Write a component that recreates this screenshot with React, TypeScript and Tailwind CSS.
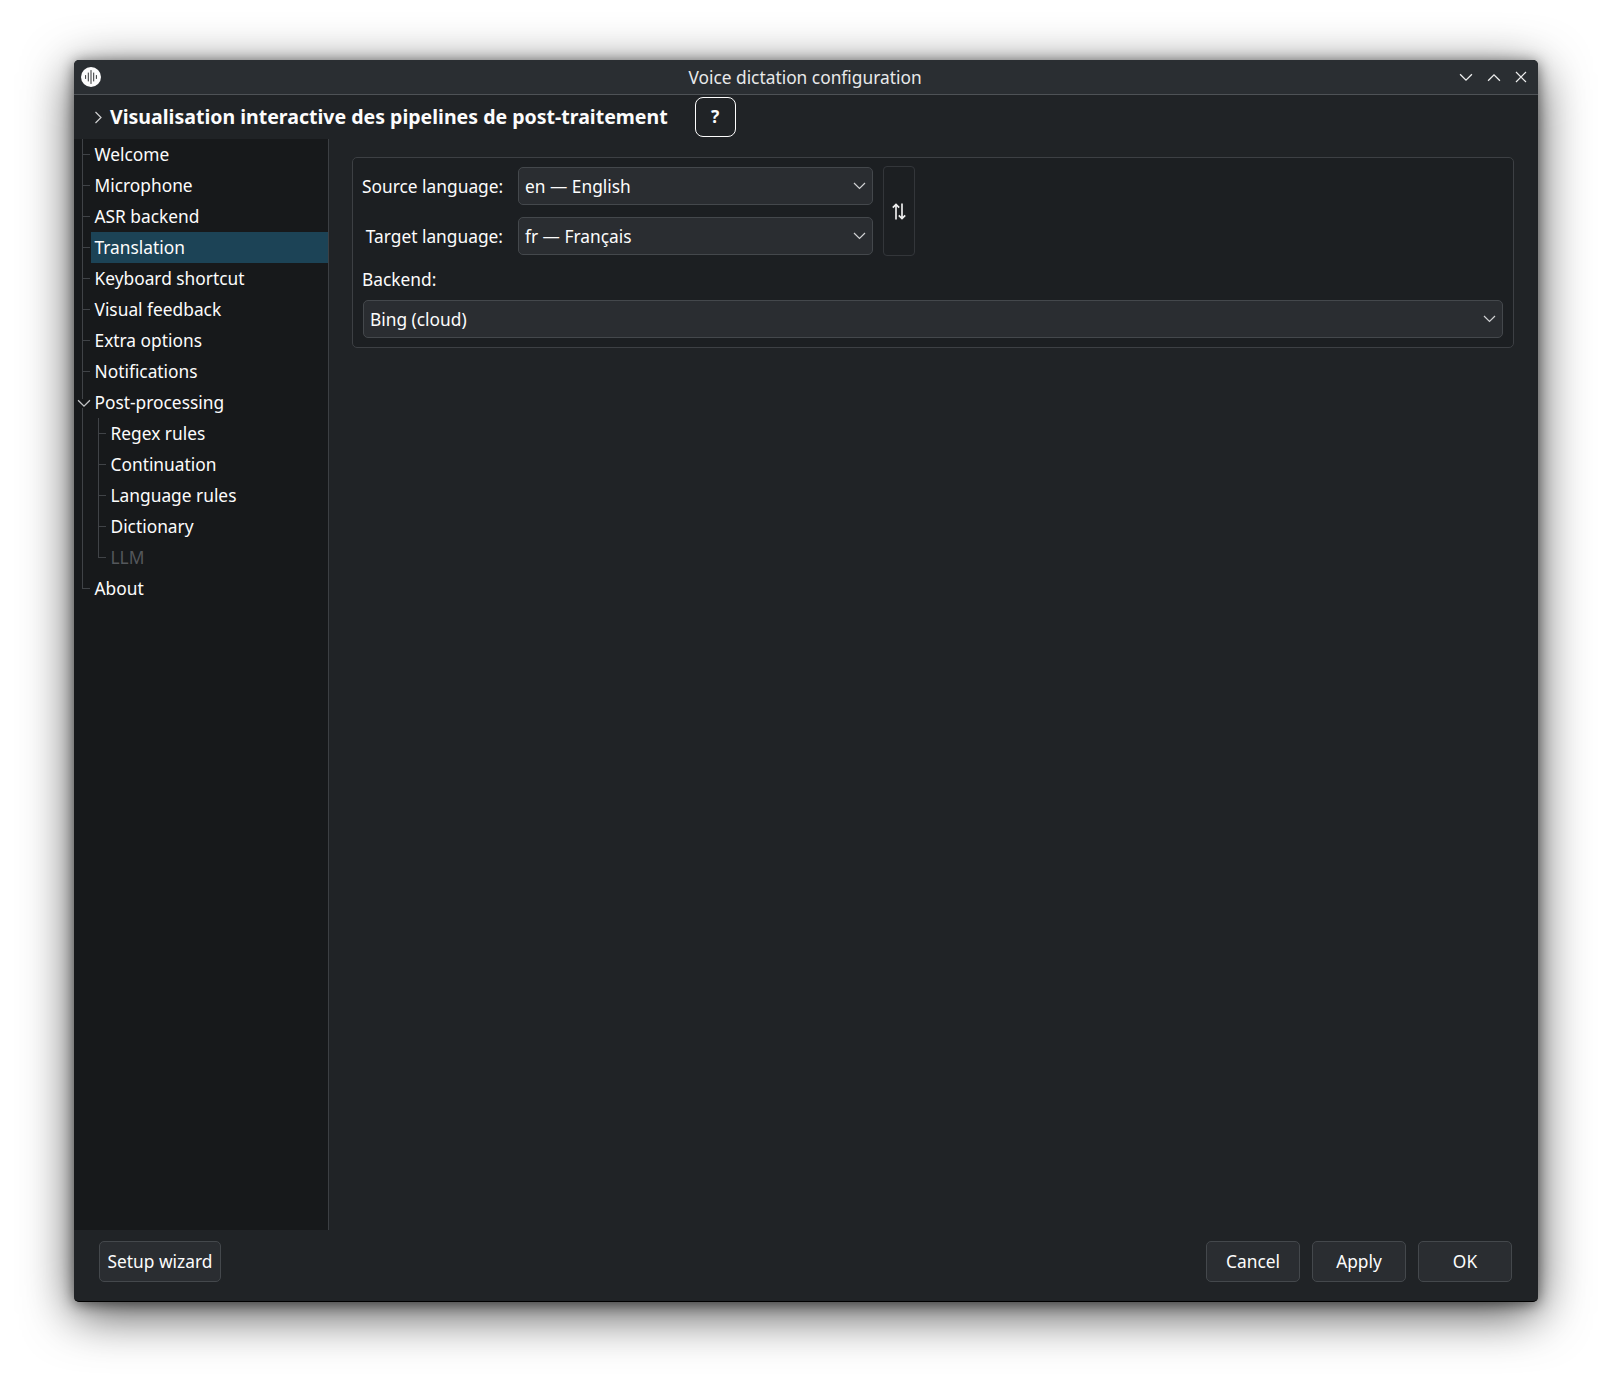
import React from "react";

const Chevron = ({ dir = "down", className = "" }: { dir?: "down" | "up" | "right"; className?: string }) => {
  const d = dir === "down" ? "M1 1 L6.5 6.5 L12 1" : dir === "up" ? "M1 7 L6.5 1.5 L12 7" : "M1.5 1 L7 6.5 L1.5 12";
  const box = dir === "right" ? "0 0 9 13" : "0 0 13 8";
  return (
    <svg viewBox={box} className={className} fill="none" stroke="currentColor" strokeWidth="1.2">
      <path d={d} />
    </svg>
  );
};

const TreeRow = ({
  label,
  level = 0,
  selected = false,
  disabled = false,
  last = false,
  expanded = false,
}: {
  label: string;
  level?: number;
  selected?: boolean;
  disabled?: boolean;
  last?: boolean;
  expanded?: boolean;
}) => (
  <div className="relative h-[31px] flex items-center">
    <span className={`absolute left-[8px] top-0 w-px bg-[#404347] ${level === 0 && last ? "h-[16px]" : "h-full"}`} />
    {level === 1 && (
      <span className={`absolute left-[24px] top-0 w-px bg-[#404347] ${last ? "h-[16px]" : "h-full"}`} />
    )}
    {level === 0 && !expanded && <span className="absolute left-[9px] top-[15px] w-[7px] h-px bg-[#404347]" />}
    {level === 1 && <span className="absolute left-[25px] top-[15px] w-[7px] h-px bg-[#404347]" />}
    {expanded && (
      <Chevron className="absolute left-[3px] top-[12px] w-[14px] h-[9px] text-[#c4c6c8] bg-[#17191b]" />
    )}
    <div
      className={`h-full flex-1 flex items-center ${level === 1 ? "ml-[33px] pl-[3.5px]" : "ml-[17px] pl-[3.5px]"} ${
        selected ? "bg-[#1c4356]" : ""
      } ${disabled ? "text-[#54575b]" : "text-[#fcfcfc]"}`}
    >
      <span className="leading-none">{label}</span>
    </div>
  </div>
);

const Combo = ({ label, className = "" }: { label: string; className?: string }) => (
  <div
    className={`h-[38px] flex items-center justify-between rounded-[5px] border border-[#44484c] bg-[#2a2d31] pl-[6px] pr-[6px] text-[#fcfcfc] ${className}`}
  >
    <span className="pt-[2px]">{label}</span>
    <Chevron className="w-[13px] h-[8px] text-[#d0d1d3]" />
  </div>
);

const Btn = ({ label, className = "" }: { label: string; className?: string }) => (
  <button
    className={`h-[41px] flex items-center justify-center rounded-[5px] border border-[#44484c] bg-[#2a2d31] text-[#fcfcfc] ${className}`}
  >
    {label}
  </button>
);

export default function App() {
  return (
    <div
      className="w-[1611px] h-[1391px] bg-white pt-[60px] pl-[74px] overflow-hidden text-[17.33px]"
      style={{ fontFamily: '"Noto Sans", sans-serif' }}
    >
      <div className="w-[1464px] h-[1242px] rounded-[5px] flex flex-col overflow-hidden bg-[#202326] border-b border-b-black shadow-[0_12px_50px_rgba(0,0,0,0.7),0_2px_14px_rgba(0,0,0,0.5)]">
        {/* title bar */}
        <div className="h-[35px] shrink-0 grid grid-cols-[1fr_auto_1fr] items-center bg-[#2a2e32] border-b border-[#4e5256] pl-[7px] pr-[11px]">
          <svg viewBox="0 0 20 20" className="w-[20px] h-[20px]">
            <circle cx="10" cy="10" r="10" fill="#fcfcfc" />
            <g stroke="#1b1e20" strokeWidth="0.9" strokeLinecap="round">
              <path d="M4.6 8.5v3M7.3 6v8M10 3.5v13M12.7 6v8M15.4 8.5v3" />
            </g>
          </svg>
          <div className="text-[#e8e9ea] leading-none pl-[2px] pt-[1px]">Voice dictation configuration</div>
          <div className="flex items-center justify-end gap-[14px] text-[#eceded]">
            <Chevron dir="down" className="w-[14px] h-[9px]" />
            <Chevron dir="up" className="w-[14px] h-[9px]" />
            <svg viewBox="0 0 12 12" className="w-[12px] h-[12px]" fill="none" stroke="currentColor" strokeWidth="1.2">
              <path d="M1 1L11 11M11 1L1 11" />
            </svg>
          </div>
        </div>

        {/* header row */}
        <div className="h-[44px] shrink-0 flex items-center pl-[20px]">
          <Chevron dir="right" className="w-[9px] h-[13px] text-[#d0d1d3]" />
          <span className="ml-[7px] text-[19.55px] font-bold text-[#fcfcfc] leading-none">
            Visualisation interactive des pipelines de post-traitement
          </span>
          <button className="ml-[27px] w-[41px] h-[40px] rounded-[8px] border border-[#fcfcfc] text-[#fcfcfc] font-bold flex items-center justify-center">
            ?
          </button>
        </div>

        {/* main */}
        <div className="flex-1 flex min-h-0">
          <div className="w-[255px] shrink-0 bg-[#17191b] border-r border-[#3c3f43]">
            <TreeRow label="Welcome" />
            <TreeRow label="Microphone" />
            <TreeRow label="ASR backend" />
            <TreeRow label="Translation" selected />
            <TreeRow label="Keyboard shortcut" />
            <TreeRow label="Visual feedback" />
            <TreeRow label="Extra options" />
            <TreeRow label="Notifications" />
            <TreeRow label="Post-processing" expanded />
            <TreeRow label="Regex rules" level={1} />
            <TreeRow label="Continuation" level={1} />
            <TreeRow label="Language rules" level={1} />
            <TreeRow label="Dictionary" level={1} />
            <TreeRow label="LLM" level={1} disabled last />
            <TreeRow label="About" last />
          </div>

          <div className="flex-1 pl-[23px] pr-[24px] pt-[18px]">
            <div className="h-[191px] rounded-[5px] border border-[#3d4044] bg-[#1c1f22] pl-[9px] pr-[10px] pt-[8px]">
              <div className="flex items-center gap-[10px]">
                <div className="flex flex-col gap-[12px]">
                  <div className="flex items-center">
                    <div className="w-[156px] text-[#fcfcfc] text-right pr-[15px] pt-[2px] whitespace-nowrap">Source language:</div>
                    <Combo label="en — English" className="w-[355px]" />
                  </div>
                  <div className="flex items-center">
                    <div className="w-[156px] text-[#fcfcfc] text-right pr-[15px] pt-[2px] whitespace-nowrap">Target language:</div>
                    <Combo label="fr — Français" className="w-[355px]" />
                  </div>
                </div>
                <div className="w-[32px] h-[90px] rounded-[4px] border border-[#33363a] flex items-center justify-center text-[#eceded]">
                  <svg viewBox="0 0 16 18" className="w-[16px] h-[19px]" fill="none" stroke="currentColor" strokeWidth="1.7">
                    <path d="M5 17V2M1.8 5.2L5 2l3.2 3.2" />
                    <path d="M11 1v15M7.8 12.8L11 16l3.2-3.2" />
                  </svg>
                </div>
              </div>
              <div className="mt-[10px] h-[28px] flex items-center text-[#fcfcfc]">Backend:</div>
              <div className="pl-[1px] mt-[6px]">
                <Combo label="Bing (cloud)" className="w-full h-[37px] pl-[6px]" />
              </div>
            </div>
          </div>
        </div>

        {/* footer */}
        <div className="h-[71px] shrink-0 flex items-start justify-between pt-[11px] pl-[25px] pr-[26px]">
          <Btn label="Setup wizard" className="w-[122px]" />
          <div className="flex gap-[12px]">
            <Btn label="Cancel" className="w-[94px]" />
            <Btn label="Apply" className="w-[94px]" />
            <Btn label="OK" className="w-[94px]" />
          </div>
        </div>
      </div>
    </div>
  );
}
